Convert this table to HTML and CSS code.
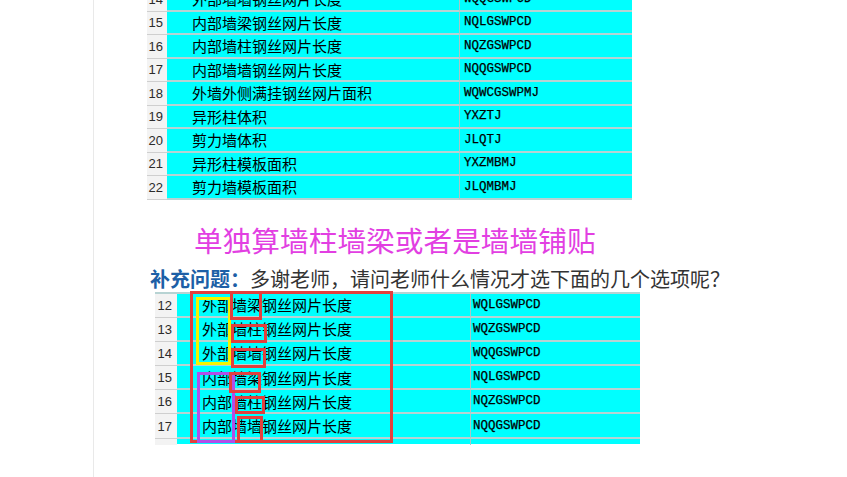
FILE: index.html
```html
<!DOCTYPE html>
<html lang="zh-CN">
<head>
<meta charset="utf-8">
<title>补充问题</title>
<link rel="stylesheet" href="styles.css">
</head>
<body>
<div class="page">
  <div class="sheet sheet-top">
    <div class="row"><div class="num">14</div><div class="name">外部墙墙钢丝网片长度</div><div class="code">WQQGSWPCD</div></div>
    <div class="row"><div class="num">15</div><div class="name">内部墙梁钢丝网片长度</div><div class="code">NQLGSWPCD</div></div>
    <div class="row"><div class="num">16</div><div class="name">内部墙柱钢丝网片长度</div><div class="code">NQZGSWPCD</div></div>
    <div class="row"><div class="num">17</div><div class="name">内部墙墙钢丝网片长度</div><div class="code">NQQGSWPCD</div></div>
    <div class="row"><div class="num">18</div><div class="name">外墙外侧满挂钢丝网片面积</div><div class="code">WQWCGSWPMJ</div></div>
    <div class="row"><div class="num">19</div><div class="name">异形柱体积</div><div class="code">YXZTJ</div></div>
    <div class="row"><div class="num">20</div><div class="name">剪力墙体积</div><div class="code">JLQTJ</div></div>
    <div class="row"><div class="num">21</div><div class="name">异形柱模板面积</div><div class="code">YXZMBMJ</div></div>
    <div class="row"><div class="num">22</div><div class="name">剪力墙模板面积</div><div class="code">JLQMBMJ</div></div>
  </div>

  <h2 class="note">单独算墙柱墙梁或者是墙墙铺贴</h2>

  <p class="question"><strong class="label">补充问题：</strong>多谢老师，请问老师什么情况才选下面的几个选项呢？</p>

  <div class="sheet sheet-bottom">
    <div class="row"><div class="num">12</div><div class="name">外部墙梁钢丝网片长度</div><div class="code">WQLGSWPCD</div></div>
    <div class="row"><div class="num">13</div><div class="name">外部墙柱钢丝网片长度</div><div class="code">WQZGSWPCD</div></div>
    <div class="row"><div class="num">14</div><div class="name">外部墙墙钢丝网片长度</div><div class="code">WQQGSWPCD</div></div>
    <div class="row"><div class="num">15</div><div class="name">内部墙梁钢丝网片长度</div><div class="code">NQLGSWPCD</div></div>
    <div class="row"><div class="num">16</div><div class="name">内部墙柱钢丝网片长度</div><div class="code">NQZGSWPCD</div></div>
    <div class="row"><div class="num">17</div><div class="name">内部墙墙钢丝网片长度</div><div class="code">NQQGSWPCD</div></div>
    <div class="row row-cut"><div class="num"></div><div class="name"></div><div class="code"></div></div>

    <span class="mark mark-big"></span>
    <span class="mark mark-yellow"></span>
    <span class="mark mark-purple"></span>
    <span class="mark mark-red r12"></span>
    <span class="mark mark-red r13"></span>
    <span class="mark mark-red r14"></span>
    <span class="mark mark-red r15"></span>
    <span class="mark mark-red r16"></span>
    <span class="mark mark-red r17"></span>
  </div>
</div>
</body>
</html>
```

FILE: styles.css
```css
* { box-sizing: border-box; }

html, body {
  margin: 0;
  padding: 0;
  background: #ffffff;
  overflow: hidden;
}

body {
  width: 847px;
  height: 477px;
  font-family: "Noto Sans CJK SC", "Noto Sans", sans-serif;
}

.page {
  margin-left: 93px;
  height: 477px;
  border-left: 1px solid #e9e9e9;
  display: flex;
  flex-direction: column;
  align-items: flex-start;
}

/* spreadsheet screenshots */
.sheet {
  display: flex;
  flex-direction: column;
  background: #00ffff;
}

.row {
  display: flex;
  align-items: stretch;
  flex: none;
}

.num {
  background: #f3f3f3;
  color: #2b2b2b;
  font-family: "Liberation Sans", Arial, sans-serif;
  font-size: 13px;
  text-align: right;
  overflow: hidden;
  white-space: nowrap;
  border-bottom: 1px solid #cfcfcf;
  display: flex;
  align-items: center;
  justify-content: flex-end;
}

.name {
  color: #000000;
  font-size: 15px;
  white-space: nowrap;
  border-bottom: 2px solid #b7d3d3;
  border-right: 1px solid #a9c6c6;
  display: flex;
  align-items: center;
}

.code {
  color: #000000;
  font-family: "Liberation Mono", "Courier New", monospace;
  font-size: 12.5px;
  -webkit-text-stroke: 0.25px #000000;
  white-space: nowrap;
  border-bottom: 2px solid #b7d3d3;
  display: flex;
  align-items: center;
}

.sheet-top {
  margin-top: -12px;
  margin-left: 53px;
}

.sheet-top .row { height: 23.5px; }
.sheet-top .num { width: 20px; padding-right: 4px; }
.sheet-top .name { width: 293px; padding-left: 25px; }
.sheet-top .code { width: 172px; padding-left: 4px; }

.note {
  margin: 22px 0 0 100px;
  font-size: 28.7px;
  line-height: 36px;
  font-weight: normal;
  color: #e23fe2;
  white-space: nowrap;
}

.question {
  margin: 8px 0 0 56px;
  font-size: 20px;
  line-height: 26px;
  color: #333333;
  white-space: nowrap;
}

.question .label {
  color: #1d5fa6;
  font-weight: bold;
}

.sheet-bottom {
  position: relative;
  margin-left: 61px;
  border-top: 2px solid #b7d3d3;
  height: 152px;
  overflow: visible;
}

.sheet-bottom .row { height: 24.2px; }
.sheet-bottom .row-cut { height: 6px; overflow: hidden; }
.sheet-bottom .row-cut .name,
.sheet-bottom .row-cut .code { border-bottom: none; }
.sheet-bottom .row-cut .num { border-bottom: none; }
.sheet-bottom .num { width: 22px; padding-right: 5px; }
.sheet-bottom .name { width: 294px; padding-left: 25px; }
.sheet-bottom .code { width: 169px; padding-left: 2px; }

/* annotation boxes drawn over the screenshot */
.mark {
  position: absolute;
  display: block;
  pointer-events: none;
}

.mark-big {
  left: 35px; top: -3px;
  width: 203px; height: 152px;
  border: 3px solid #e2403e;
}

.mark-yellow {
  left: 41px; top: 3px;
  width: 35px; height: 68px;
  border: 3px solid #f4f400;
}

.mark-purple {
  left: 42px; top: 78px;
  width: 38px; height: 71px;
  border: 3px solid #b24ee8;
}

.mark-red { border: 3px solid #e2403e; }
.r12 { left: 75px; top: -3px; width: 32px; height: 29px; }
.r13 { left: 76px; top: 30px; width: 36px; height: 19px; }
.r14 { left: 76px; top: 54px; width: 35px; height: 20px; }
.r15 { left: 74px; top: 78px; width: 32px; height: 21px; }
.r16 { left: 80px; top: 102px; width: 30px; height: 18px; }
.r17 { left: 82px; top: 122px; width: 26px; height: 27px; }
```
